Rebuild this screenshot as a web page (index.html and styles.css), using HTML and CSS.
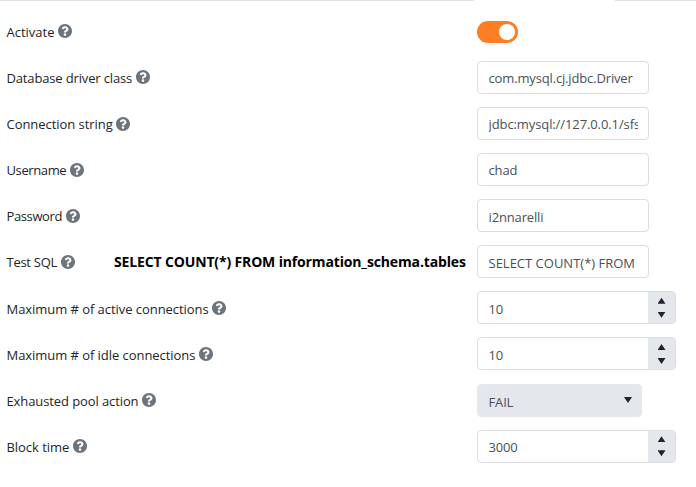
FILE: index.html
```
<!DOCTYPE html>
<html lang="en">
<head>
<meta charset="utf-8">
<title>Database settings</title>
<link rel="stylesheet" href="styles.css">
</head>
<body>
<svg class="defs" aria-hidden="true">
  <symbol id="help" viewBox="8 8 496 496"><path d="M504 256c0 136.997-111.043 248-248 248S8 392.997 8 256C8 119.083 119.043 8 256 8s248 111.083 248 248zM262.655 90c-54.497 0-89.255 22.957-116.549 63.758-3.536 5.286-2.353 12.415 2.715 16.258l34.699 26.31c5.205 3.947 12.621 3.008 16.665-2.122 17.864-22.658 30.113-35.797 57.303-35.797 20.429 0 45.698 13.148 45.698 32.958 0 14.976-12.363 22.667-32.534 33.976C247.128 238.528 216 254.941 216 296v4c0 6.627 5.373 12 12 12h56c6.627 0 12-5.373 12-12v-1.333c0-28.462 83.186-29.647 83.186-106.667 0-58.002-60.165-102-116.531-102zM256 338c-25.365 0-46 20.635-46 46 0 25.364 20.635 46 46 46s46-20.636 46-46c0-25.364-20.635-46-46-46z"/></symbol>
</svg>
<div class="rule"><span class="active-tab"></span></div>
<main class="form">
  <div class="row"><label class="label">Activate</label><svg class="help"><use href="#help"/></svg><div class="control"><div class="switch"><span class="knob"></span></div></div></div>
  <div class="row"><label class="label snug">Database driver class</label><svg class="help"><use href="#help"/></svg><div class="control"><div class="input snug">com.mysql.cj.jdbc.Driver</div></div></div>
  <div class="row"><label class="label near">Connection string</label><svg class="help"><use href="#help"/></svg><div class="control"><div class="input close"><span class="clip">jdbc:mysql://127.0.0.1/sfs</span></div></div></div>
  <div class="row"><label class="label tight">Username</label><svg class="help"><use href="#help"/></svg><div class="control"><div class="input snug">chad</div></div></div>
  <div class="row"><label class="label tight">Password</label><svg class="help"><use href="#help"/></svg><div class="control"><div class="input snug">i2nnarelli</div></div></div>
  <div class="row"><label class="label medium">Test SQL</label><svg class="help"><use href="#help"/></svg><strong class="note">SELECT COUNT(*) FROM information_schema.tables</strong><div class="control"><div class="input">SELECT COUNT(*) FROM</div></div></div>
  <div class="row"><label class="label near">Maximum # of active connections</label><svg class="help"><use href="#help"/></svg><div class="control"><div class="input number medium">10<span class="spinner"><i class="up"></i><i class="down"></i></span></div></div></div>
  <div class="row"><label class="label near">Maximum # of idle connections</label><svg class="help"><use href="#help"/></svg><div class="control"><div class="input number medium">10<span class="spinner"><i class="up"></i><i class="down"></i></span></div></div></div>
  <div class="row"><label class="label close">Exhausted pool action</label><svg class="help"><use href="#help"/></svg><div class="control"><div class="input select snug">FAIL<i class="down"></i></div></div></div>
  <div class="row"><label class="label near">Block time</label><svg class="help"><use href="#help"/></svg><div class="control"><div class="input number snug">3000<span class="spinner"><i class="up"></i><i class="down"></i></span></div></div></div>
</main>
</body>
</html>
```
FILE: styles.css
```
* { box-sizing: border-box; }
body {
  margin: 0;
  background: #fff;
  color: #212529;
  font: 13px/20px "Open Sans", "Noto Sans", sans-serif;
}
.defs { display: none; }
.rule { height: 1px; background: #dee2e6; display: flex; }
.active-tab { width: 141px; margin-left: 474px; background: #fff; }
.form { padding: 7.8px 0 0 6.5px; }
.row { display: flex; align-items: center; height: 46.125px; }
.label { white-space: nowrap; }
.near { letter-spacing: -0.05px; }
.close { letter-spacing: -0.1px; }
.snug { letter-spacing: -0.15px; }
.medium { letter-spacing: -0.27px; }
.tight { letter-spacing: -0.38px; }
.help { width: 14px; height: 14px; margin: -1px 0 0 3.5px; fill: #6c757d; flex: none; }
.note {
  margin-left: 39.5px;
  color: #000;
  font-size: 14px;
  font-weight: 700;
  letter-spacing: -0.15px;
  white-space: nowrap;
}
.control { width: 219px; margin-left: auto; flex: none; }
.switch {
  display: flex;
  align-items: center;
  justify-content: flex-end;
  width: 41px;
  height: 22px;
  padding-right: 3px;
  border-radius: 11px;
  background: #fd7e25;
}
.knob { width: 16px; height: 16px; border-radius: 50%; background: #fff; }
.input {
  display: flex;
  align-items: center;
  width: 172px;
  height: 33px;
  margin-top: -1.5px;
  padding: 2px 10px 0 10.5px;
  border: 1px solid #dcdddf;
  border-radius: 4px;
  background: #fff;
  color: #495057;
  white-space: nowrap;
}
.clip { overflow: hidden; }
.number { width: 199px; padding-right: 0; }
.spinner {
  display: flex;
  flex-direction: column;
  align-items: center;
  justify-content: center;
  gap: 8px;
  width: 27px;
  height: 31px;
  margin: -2px 0 0 auto;
  border-radius: 0 3px 3px 0;
  background: #e4e7ec;
}
.up, .down { width: 8px; height: 6px; background: #212529; }
.up { clip-path: polygon(50% 0, 100% 100%, 0 100%); }
.down { clip-path: polygon(0 0, 100% 0, 50% 100%); }
.select {
  justify-content: space-between;
  width: 165px;
  padding-top: 3px;
  padding-right: 9px;
  border-color: #e4e7ec;
  background: #e4e7ec;
}
.select .down { margin-top: -3px; }
```
